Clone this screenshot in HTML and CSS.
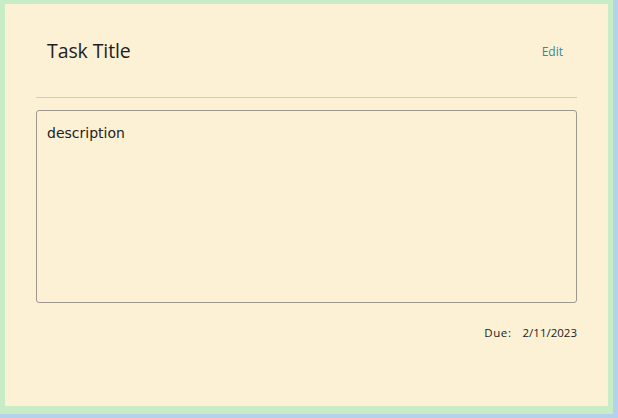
FILE: index.html
```html
<!DOCTYPE html>
<html>
<head>
<meta charset="utf-8">
<link rel="stylesheet" href="styles.css">
</head>
<body>
<div class="window">
  <div class="frame">
    <div class="card">
      <div class="header">
        <h1 class="title">Task Title</h1>
        <a class="edit">Edit</a>
      </div>
      <div class="divider"></div>
      <div class="desc">description</div>
      <div class="due"><span class="due-label">Due:</span><span class="due-date">2/11/2023</span></div>
    </div>
  </div>
</div>
</body>
</html>
```
FILE: styles.css
```css
html, body {
  margin: 0;
  padding: 0;
  width: 618px;
  height: 418px;
  overflow: hidden;
  background: #b4d3ea;
}
.window {
  width: 613px;
  height: 414px;
  background: #c8ecc6;
  box-sizing: border-box;
  padding: 4px 5px 8px 5px;
}
.frame {
  height: 100%;
  background: #fdf1d5;
}
.card {
  height: 100%;
  box-sizing: border-box;
  padding: 0 31px 0 31px;
  display: flex;
  flex-direction: column;
  font-family: "Open Sans", "Noto Sans", sans-serif;
  color: #222;
}
.header {
  display: flex;
  justify-content: space-between;
  align-items: center;
  height: 93px;
  padding: 0 14px 0 11px;
}
.title {
  margin: 0;
  font-weight: 400;
  font-size: 19.5px;
  letter-spacing: -0.1px;
  color: #1e1e1e;
}
.edit {
  font-size: 12px;
  color: #2b8aa6;
  margin-top: 2px;
}
.divider {
  height: 1px;
  background: #d3cbbb;
}
.desc {
  margin-top: 12px;
  height: 193px;
  box-sizing: border-box;
  border: 1px solid #9e988e;
  border-radius: 3px;
  padding: 14px 10px 10px;
  font-family: "DejaVu Sans", sans-serif;
  font-size: 14px;
  color: #222;
}
.due {
  display: flex;
  justify-content: flex-end;
  gap: 11px;
  margin-top: 22px;
  font-size: 11.5px;
  color: #222;
}
.due-label {
  letter-spacing: 0.6px;
}
```
